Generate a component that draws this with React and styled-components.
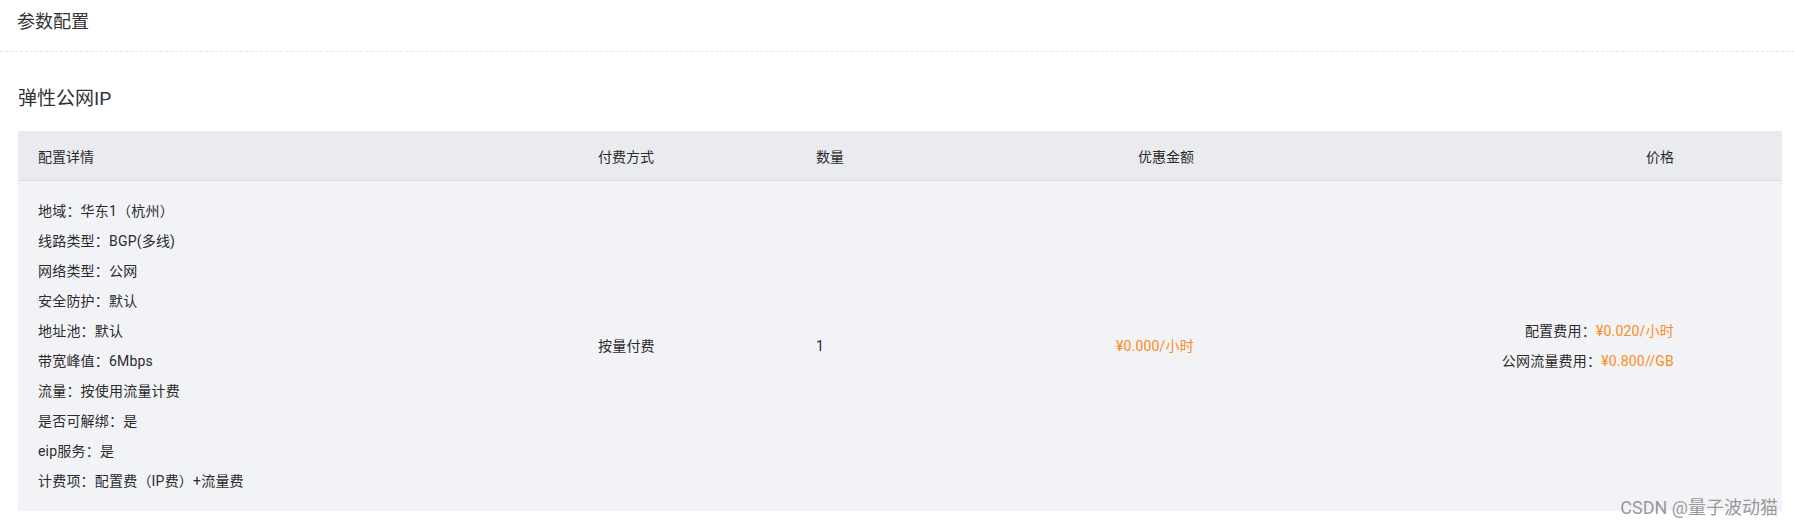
import React from "react"
import styled, { createGlobalStyle } from "styled-components"

const GlobalStyle = createGlobalStyle`
  html, body {
    margin: 0;
    padding: 0;
    background: #fff;
  }
  body {
    font-family: Roboto, "Noto Sans CJK SC", sans-serif;
    color: #333;
  }
`

const Page = styled.div`
  position: relative;
  width: 1794px;
  height: 528px;
  overflow: hidden;
`

const PageHeader = styled.div`
  height: 51px;
  padding-left: 17px;
  font-size: 18px;
  line-height: 44px;
  color: #333;
  border-bottom: 1px dashed #e6e6e6;
`

const Content = styled.div`
  padding: 0 12px 0 18px;
`

const SectionTitle = styled.h3`
  margin: 33px 0 18px;
  font-size: 19px;
  font-weight: normal;
  line-height: 28px;
  color: #333;
`

const Table = styled.div`
  display: grid;
  grid-template-columns: 560px 218px 218px 200px 1fr;
  font-size: 14px;
  color: #2b2b2b;
`

const HeadCell = styled.div`
  height: 49px;
  display: flex;
  align-items: center;
  justify-content: ${p => (p.$right ? "flex-end" : "flex-start")};
  padding: 0 ${p => p.$padRight || 20}px 0 20px;
  background: #eaebef;
  border-bottom: 1px solid #dcdde2;
`

const BodyCell = styled.div`
  display: flex;
  flex-direction: column;
  justify-content: center;
  align-items: ${p => (p.$right ? "flex-end" : "flex-start")};
  padding: 15px ${p => p.$padRight || 20}px 15px 20px;
  background: #f2f3f6;
  line-height: 30px;
`

const Line = styled.div`
  white-space: nowrap;
  letter-spacing: 0.2px;
`

const Price = styled.span`
  color: #ff8a1c;
`

const Watermark = styled.div`
  position: absolute;
  right: 16px;
  top: 496px;
  font-size: 18px;
  line-height: 24px;
  color: rgba(120, 120, 120, 0.75);
  white-space: nowrap;
`

const details = [
  "地域：华东1（杭州）",
  "线路类型：BGP(多线)",
  "网络类型：公网",
  "安全防护：默认",
  "地址池：默认",
  "带宽峰值：6Mbps",
  "流量：按使用流量计费",
  "是否可解绑：是",
  "eip服务：是",
  "计费项：配置费（IP费）+流量费",
]

const App = () => {
  return (
    <Page>
      <GlobalStyle />
      <PageHeader>参数配置</PageHeader>
      <Content>
        <SectionTitle>弹性公网IP</SectionTitle>
        <Table>
          <HeadCell>配置详情</HeadCell>
          <HeadCell>付费方式</HeadCell>
          <HeadCell>数量</HeadCell>
          <HeadCell $right>优惠金额</HeadCell>
          <HeadCell $right $padRight={108}>价格</HeadCell>

          <BodyCell>
            {details.map(d => (
              <Line key={d}>{d}</Line>
            ))}
          </BodyCell>
          <BodyCell>
            <Line>按量付费</Line>
          </BodyCell>
          <BodyCell>
            <Line>1</Line>
          </BodyCell>
          <BodyCell $right>
            <Line>
              <Price>¥0.000/小时</Price>
            </Line>
          </BodyCell>
          <BodyCell $right $padRight={108}>
            <Line>
              配置费用：<Price>¥0.020/小时</Price>
            </Line>
            <Line>
              公网流量费用：<Price>¥0.800//GB</Price>
            </Line>
          </BodyCell>
        </Table>
      </Content>
      <Watermark>CSDN @量子波动猫</Watermark>
    </Page>
  )
}

export default App
